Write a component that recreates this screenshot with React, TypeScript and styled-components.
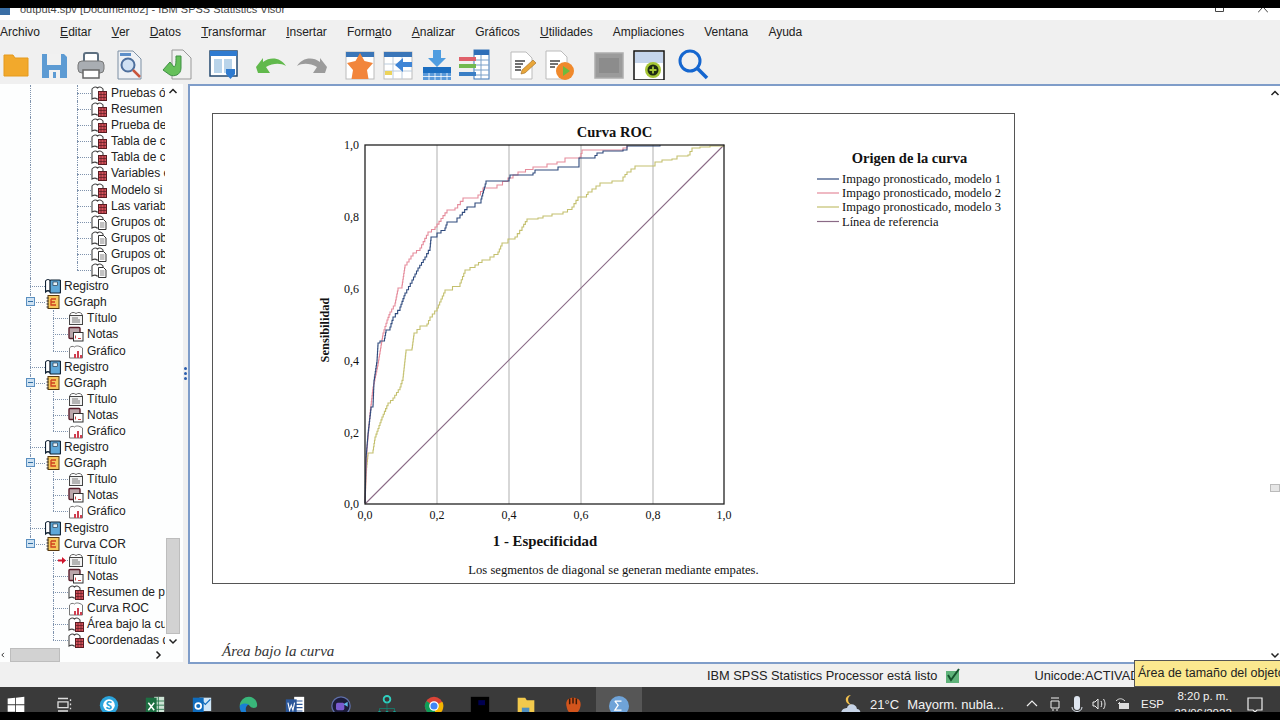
import React from 'react';
import styled, { createGlobalStyle } from 'styled-components';

const Global = createGlobalStyle`
  html, body { margin: 0; padding: 0; background: #000; }
  body { font-family: "Liberation Sans", Arial, sans-serif; overflow: hidden; }
`;

/* ---------- chart data, in page pixels ---------- */
type Pt = [number, number];

const blue: Pt[] = [[365,503],[366,457],[368,433],[371,407],[373,405],[374,380],[377,360],[378,343],[380,341],[384,341],[386,330],[390,327],[393,317],[400,307],[405,293],[412,280],[418,268],[425,257],[430,247],[431,237],[437,233],[445,228],[447,222],[457,218],[460,215],[467,207],[475,203],[481,199],[486,181],[508,181],[510,175],[533,173],[535,170],[558,167],[579,163],[579,158],[593,158],[597,153],[603,151],[623,150],[627,146],[660,145]];
const pink: Pt[] = [[365,503],[367,447],[370,413],[373,387],[378,363],[383,333],[387,320],[390,312],[395,303],[398,288],[402,285],[405,265],[413,253],[420,248],[428,232],[435,227],[447,210],[455,208],[463,198],[478,195],[483,188],[497,185],[508,178],[518,172],[533,167],[547,164],[557,162],[565,158],[580,157],[582,150],[623,148],[627,145]];
const olive: Pt[] = [[365,503],[366,473],[368,453],[373,450],[375,437],[382,417],[388,403],[393,398],[400,387],[403,377],[406,350],[412,348],[414,333],[420,326],[427,324],[430,317],[437,308],[445,290],[460,283],[465,270],[475,265],[482,260],[490,257],[498,252],[502,243],[508,239],[515,237],[522,227],[527,219],[538,218],[543,216],[552,214],[563,212],[572,207],[578,197],[585,197],[588,192],[600,183],[612,181],[623,177],[627,172],[635,166],[652,166],[655,162],[662,160],[672,159],[677,156],[688,155],[692,148],[700,147],[710,146],[724,145]];

const stairs = (pts: Pt[]) => {
  let d = `M${pts[0][0]} ${pts[0][1]}`;
  for (let i = 1; i < pts.length; i++) {
    const [x0, y0] = pts[i - 1];
    const [x1, y1] = pts[i];
    const n = Math.max(1, Math.round(Math.abs(y1 - y0) / 3));
    for (let s = 1; s <= n; s++) {
      d += `H${x0 + ((x1 - x0) * s) / n}V${y0 + ((y1 - y0) * s) / n}`;
    }
  }
  return d;
};

const legend = [
  { y: 179, color: '#2f4a7d', label: 'Impago pronosticado, modelo 1' },
  { y: 193, color: '#e58b9b', label: 'Impago pronosticado, modelo 2' },
  { y: 207, color: '#c4c06e', label: 'Impago pronosticado, modelo 3' },
  { y: 221.5, color: '#8a6a86', label: 'Línea de referencia' },
];

/* ---------- tree data ---------- */
type Kind = 'table' | 'doc' | 'log' | 'group' | 'title' | 'notes' | 'chart';
type Node = { level: 1 | 2 | 3; kind: Kind; text: string; end?: boolean; open?: boolean; mark?: boolean; after?: boolean };

const graphGroup = (): Node[] => [
  { level: 1, kind: 'group', text: 'GGraph', open: true },
  { level: 2, kind: 'title', text: 'Título' },
  { level: 2, kind: 'notes', text: 'Notas' },
  { level: 2, kind: 'chart', text: 'Gráfico', end: true },
  { level: 1, kind: 'log', text: 'Registro' },
];

const nodes: Node[] = [
  { level: 3, kind: 'table', text: 'Pruebas ómnibus' },
  { level: 3, kind: 'table', text: 'Resumen' },
  { level: 3, kind: 'table', text: 'Prueba de' },
  { level: 3, kind: 'table', text: 'Tabla de c' },
  { level: 3, kind: 'table', text: 'Tabla de c' },
  { level: 3, kind: 'table', text: 'Variables en' },
  { level: 3, kind: 'table', text: 'Modelo si se' },
  { level: 3, kind: 'table', text: 'Las variab' },
  { level: 3, kind: 'doc', text: 'Grupos ob' },
  { level: 3, kind: 'doc', text: 'Grupos ob' },
  { level: 3, kind: 'doc', text: 'Grupos ob' },
  { level: 3, kind: 'doc', text: 'Grupos ob', end: true },
  { level: 1, kind: 'log', text: 'Registro' },
  ...graphGroup(),
  ...graphGroup(),
  ...graphGroup(),
  { level: 1, kind: 'group', text: 'Curva COR', open: true, end: true },
  { level: 2, kind: 'title', text: 'Título', mark: true, after: true },
  { level: 2, kind: 'notes', text: 'Notas', after: true },
  { level: 2, kind: 'table', text: 'Resumen de procesamiento', after: true },
  { level: 2, kind: 'chart', text: 'Curva ROC', after: true },
  { level: 2, kind: 'table', text: 'Área bajo la curva', after: true },
  { level: 2, kind: 'table', text: 'Coordenadas de la curva', end: true, after: true },
];

const menu: [string, string, string][] = [
  ['', '', 'Archivo'], ['', 'E', 'ditar'], ['', 'V', 'er'], ['', 'D', 'atos'], ['', 'T', 'ransformar'],
  ['', 'I', 'nsertar'], ['Form', 'a', 'to'], ['', 'A', 'nalizar'], ['', '', 'Gráficos'], ['', 'U', 'tilidades'],
  ['', '', 'Ampliaciones'], ['', '', 'Ventana'], ['', '', 'Ayuda'],
];

/* ---------- layout ---------- */
const Screen = styled.div`
  width: 1280px;
  height: 720px;
  box-sizing: border-box;
  padding: 8px 0;
  background: #000;
  display: flex;
  flex-direction: column;
  overflow: hidden;
`;
const Win = styled.div`
  flex: 1;
  min-height: 0;
  display: flex;
  flex-direction: column;
  background: #f0f0f0;
`;
const TitleBar = styled.div`
  height: 12px;
  background: #fff;
  display: flex;
  align-items: flex-start;
  overflow: hidden;
  color: #444;
  font-size: 11px;
`;
const TitleText = styled.span`
  margin: -6px 0 0 10px;
  line-height: 14px;
  white-space: nowrap;
  flex: 1;
`;
const CaptionIcon = styled.svg<{ $r: number }>`
  margin-right: ${(p) => p.$r}px;
  flex: none;
`;
const MenuBar = styled.div`
  height: 24px;
  display: flex;
  align-items: center;
  gap: 20.1px;
  font-size: 12px;
  color: #222;
`;
const MenuItem = styled.span`
  white-space: nowrap;
`;
const Toolbar = styled.div`
  height: 40px;
  display: flex;
  align-items: flex-start;
  padding-top: 4px;
  box-sizing: border-box;
`;
const ToolSlot = styled.div<{ $gap: number }>`
  width: 32px;
  height: 32px;
  margin-left: ${(p) => p.$gap}px;
  flex: none;
`;
const Workspace = styled.div`
  flex: 1;
  min-height: 0;
  display: flex;
`;
const LeftPane = styled.div`
  width: 183px;
  height: 578px;
  flex: none;
  display: flex;
  flex-direction: column;
  background: #fdfefe;
`;
const TreeRow = styled.div`
  flex: 1;
  min-height: 0;
  display: flex;
`;
const Tree = styled.div`
  width: 165px;
  margin-right: 1px;
  flex: none;
  overflow: hidden;
  padding-top: 1px;
`;
const Row = styled.div`
  height: 16.1px;
  display: flex;
  align-items: stretch;
  position: relative;
  font-size: 12px;
  color: #222;
  white-space: nowrap;
`;
const Gutter = styled.div`
  width: 30px;
  flex: none;
`;
const Rail = styled.div<{ $w: number; $off?: boolean }>`
  width: ${(p) => p.$w}px;
  flex: none;
  box-sizing: border-box;
  border-left: 1px dotted ${(p) => (p.$off ? 'transparent' : '#7f93ad')};
`;
const Elbow = styled.div<{ $w: number; $end?: boolean }>`
  width: ${(p) => p.$w}px;
  flex: none;
  position: relative;
  &::before {
    content: '';
    position: absolute;
    left: 0;
    top: 0;
    height: ${(p) => (p.$end ? '50%' : '100%')};
    border-left: 1px dotted #7f93ad;
  }
  &::after {
    content: '';
    position: absolute;
    left: 0;
    right: 0;
    top: 50%;
    border-top: 1px dotted #7f93ad;
  }
`;
const Expander = styled.div`
  position: absolute;
  left: 26px;
  top: 3px;
  width: 7px;
  height: 7px;
  border: 1px solid #5a8fc0;
  background: #cfe3f3;
  &::after {
    content: '';
    position: absolute;
    left: 1px;
    right: 1px;
    top: 3px;
    height: 1px;
    background: #2f6ea5;
  }
`;
const Mark = styled.svg`
  position: absolute;
  left: 58px;
  top: 5px;
`;
const NodeIcon = styled.svg`
  width: 16px;
  height: 16px;
  flex: none;
`;
const NodeText = styled.span<{ $gap: number }>`
  margin-left: ${(p) => p.$gap}px;
  line-height: 16px;
`;
const VScroll = styled.div`
  width: 14px;
  flex: none;
  display: flex;
  flex-direction: column;
  align-items: stretch;
  height: 564px;
`;
const ScrollBtn = styled.div`
  height: 14px;
  flex: none;
  display: flex;
  align-items: center;
  justify-content: center;
  color: #222;
`;
const VTrack = styled.div`
  flex: 1;
  display: flex;
  flex-direction: column;
  justify-content: flex-end;
`;
const VThumb = styled.div`
  height: 96px;
  background: #d2d2d2;
  border: 1px solid #bdbdbd;
  box-sizing: border-box;
`;
const HScroll = styled.div`
  height: 14px;
  width: 166px;
  flex: none;
  display: flex;
  align-items: stretch;
`;
const HThumb = styled.div`
  width: 50px;
  background: #d2d2d2;
  border: 1px solid #bdbdbd;
  box-sizing: border-box;
  margin-left: 4px;
`;
const HEnd = styled.div`
  width: 16px;
  margin-left: auto;
  display: flex;
  align-items: center;
  justify-content: center;
`;
const HStart = styled.div`
  width: 6px;
  display: flex;
  align-items: center;
  justify-content: center;
`;
const Splitter = styled.div`
  width: 5px;
  flex: none;
  display: flex;
  flex-direction: column;
  align-items: center;
  justify-content: center;
  gap: 2px;
  height: 578px;
`;
const Grip = styled.span`
  width: 3px;
  height: 3px;
  border-radius: 50%;
  background: #2d5fae;
`;
const MainPane = styled.div`
  flex: 1;
  height: 580px;
  box-sizing: border-box;
  border: 2px solid #7f9dc9;
  border-right: 0;
  background: #fff;
  display: flex;
`;
const Viewer = styled.div`
  flex: 1;
  min-width: 0;
  padding: 27px 0 0 22px;
`;
const ChartCard = styled.div`
  width: 803px;
  height: 471px;
  box-sizing: border-box;
  border: 1px solid #555;
  background: #fff;
`;
const ChartSvg = styled.svg`
  display: block;
  margin: -1px;
  font-family: "Liberation Serif", "Times New Roman", serif;
`;
const AreaTitle = styled.div`
  margin: 59px 0 0 10px;
  font-family: "Liberation Serif", serif;
  font-style: italic;
  font-size: 15px;
  color: #333;
`;
const RightScroll = styled.div`
  width: 12px;
  flex: none;
  display: flex;
  flex-direction: column;
  align-items: flex-end;
  padding: 2px 0;
`;
const RThumb = styled.div`
  width: 10px;
  height: 8px;
  margin: 386px 0 auto;
  background: #e6e6e6;
  border: 1px solid #bbb;
  box-sizing: border-box;
`;
const StatusBar = styled.div`
  height: 23px;
  display: flex;
  align-items: center;
  position: relative;
  font-size: 12.8px;
  color: #222;
  overflow: visible;
  white-space: nowrap;
`;
const StatusText = styled.span`
  margin-left: 707px;
`;
const StatusIcon = styled.svg`
  margin-left: 8px;
  flex: none;
`;
const UnicodeText = styled.span`
  margin-left: 73px;
`;
const Tip = styled.div`
  position: absolute;
  left: 1134px;
  top: -4px;
  width: 146px;
  height: 27px;
  box-sizing: border-box;
  background: #fbe88f;
  border: 1px solid #555;
  border-right: 0;
  padding-left: 3px;
  line-height: 24px;
  font-size: 12.5px;
  overflow: hidden;
  color: #222;
`;
const Taskbar = styled.div`
  height: 25px;
  flex: none;
  background: #3a3a3a;
  display: flex;
  overflow: hidden;
  position: relative;
`;
const TaskSlot = styled.div<{ $active?: boolean }>`
  width: 46.4px;
  height: 25px;
  flex: none;
  display: flex;
  justify-content: center;
  padding-top: 8px;
  box-sizing: border-box;
  background: ${(p) => (p.$active ? '#565656' : 'transparent')};
`;
const TaskIcons = styled.div`
  display: flex;
  margin-left: -7px;
`;
const Tray = styled.div`
  margin-left: auto;
  display: flex;
  align-items: flex-start;
  color: #f2f2f2;
  font-size: 13px;
  padding: 9px 16px 0 0;
  white-space: nowrap;
`;
const TrayText = styled.span<{ $gap?: number; $size?: number }>`
  margin-left: ${(p) => p.$gap ?? 0}px;
  font-size: ${(p) => p.$size ?? 13}px;
  line-height: 17px;
`;
const TrayIcon = styled.svg<{ $gap?: number; $top?: number }>`
  margin-left: ${(p) => p.$gap ?? 0}px;
  margin-top: ${(p) => p.$top ?? 0}px;
  flex: none;
`;
const Clock = styled.div`
  margin-left: 4px;
  width: 70px;
  text-align: center;
  font-size: 11.5px;
  line-height: 17px;
  margin-top: -8px;
`;

/* ---------- icons ---------- */
const Book = () => (
  <path d="M1 4 C3 1.500 5 1.500 6.500 3 C8 1.500 10 1.500 12 4 V8 H8 V14 H6 C5 13 3 13 1 14 Z" fill="#fff" stroke="#444" strokeWidth="1.100" />
);

const TreeIcon = ({ kind }: { kind: Kind }) => {
  if (kind === 'log')
    return (
      <NodeIcon viewBox="0 0 16 16">
        <path d="M0.500 3 C2 1 4 1 5.500 3 V14 C4 12.500 2 12.500 0.500 14 Z" fill="#fff" stroke="#123" strokeWidth="1.200" />
        <rect x="5" y="2" width="10.500" height="13" rx="1" fill="#5fa8d8" stroke="#123" strokeWidth="1.200" />
        <rect x="8" y="4" width="4.500" height="3.500" fill="#e6f3fb" stroke="#123" strokeWidth=".6" />
      </NodeIcon>
    );
  if (kind === 'group')
    return (
      <NodeIcon viewBox="0 0 16 16">
        <rect x="3" y="1.500" width="11" height="13" fill="#f6c95e" stroke="#5a3a10" />
        <path d="M1.500 4h2M1.500 7h2M1.500 10h2M1.500 13h2" stroke="#222" />
        <path d="M6 5h5M6 5v6h5M6 8h4" stroke="#d0401f" strokeWidth="1.300" fill="none" />
      </NodeIcon>
    );
  if (kind === 'table')
    return (
      <NodeIcon viewBox="0 0 16 16">
        <Book />
        <rect x="7.500" y="6.500" width="8" height="9" fill="#d4505a" stroke="#5a1d22" />
        <path d="M7.500 9.500h8M7.500 12.500h8M10 6.500v9M13 6.500v9" stroke="#5a1d22" strokeWidth=".7" />
      </NodeIcon>
    );
  if (kind === 'doc')
    return (
      <NodeIcon viewBox="0 0 16 16">
        <Book />
        <path d="M7.500 5.500h5l2.500 2.500v7.500H7.500Z" fill="#fff" stroke="#333" />
        <path d="M9 9h4.500M9 11h4.500M9 13h4.500" stroke="#666" strokeWidth=".8" />
      </NodeIcon>
    );
  if (kind === 'title')
    return (
      <NodeIcon viewBox="0 0 16 16">
        <path d="M2 4 C4 2 6 2 8 3.500 C10 2 12 2 14 4 V6 H2Z" fill="#fff" stroke="#666" />
        <rect x="1.500" y="5.500" width="13" height="9" fill="#f3f3f3" stroke="#444" />
        <path d="M4 8h6M4 10h8M4 12h8" stroke="#777" strokeWidth="1" />
      </NodeIcon>
    );
  if (kind === 'notes')
    return (
      <NodeIcon viewBox="0 0 16 16">
        <rect x="1" y="1.500" width="11" height="11" rx="1" fill="#b9a6aa" stroke="#5a1d2a" strokeWidth="1.400" />
        <rect x="5.500" y="6.500" width="9.500" height="8.500" fill="#fff" stroke="#333" />
        <path d="M7.500 9.500v3M10 12.500h3" stroke="#c44" strokeWidth="1" />
      </NodeIcon>
    );
  return (
    <NodeIcon viewBox="0 0 16 16">
      <path d="M1.500 5 C3 3 5 3 6.500 4 C8 2.500 11 2.500 14.500 5 V15 H1.500Z" fill="#fff" stroke="#777" />
      <path d="M6 15v-4h2v4ZM9 15V8h2v7ZM12 15v-3h2v3Z" fill="#cf3f50" />
    </NodeIcon>
  );
};

const Chevron = ({ d }: { d: string }) => (
  <svg width="10" height="10" viewBox="0 0 10 10">
    <path d={d} fill="none" stroke="#222" strokeWidth="1.500" />
  </svg>
);
const UP = 'M1.500 7 L5 3.500 L8.500 7';
const DOWN = 'M1.500 3.500 L5 7 L8.500 3.500';
const LEFT = 'M6.500 1.500 L3 5 L6.500 8.500';
const RIGHT = 'M3.500 1.500 L7 5 L3.500 8.500';

const tools: { gap: number; art: React.ReactNode }[] = [
  { gap: 0.5, art: <path d="M3 10 V7 H12 L14 10 H27 V28 H3Z" fill="#f2a92c" stroke="#e59a1c" /> },
  { gap: 5.5, art: (<g><path d="M4 6H26L29 9V30H4Z" fill="#5d9bd3" /><rect x="9" y="6" width="14" height="11" fill="#f1f1f1" /><rect x="11" y="22" width="11" height="8" fill="#f1f1f1" /><rect x="15" y="24" width="3" height="6" fill="#5d9bd3" /></g>) },
  { gap: 5, art: (<g><rect x="9" y="5" width="14" height="10" rx="2" fill="#fff" stroke="#5d6f80" strokeWidth="2" /><rect x="3" y="13" width="26" height="12" rx="4" fill="#a9adb2" stroke="#777" /><rect x="8" y="22" width="16" height="8" fill="#fff" stroke="#666" strokeWidth="1.500" /></g>) },
  { gap: 6.5, art: (<g><path d="M4 3H19L27 11V31H4Z" fill="#eef1f5" stroke="#7d8fa3" /><rect x="6" y="5" width="11" height="3" fill="#5d8fc9" /><circle cx="14" cy="17" r="6.500" fill="#cfe0f3" stroke="#4d6f9d" strokeWidth="2" /><path d="M19 22 L26 29" stroke="#c8553c" strokeWidth="2.500" /></g>) },
  { gap: 15.5, art: (<g><path d="M11 2H22L30 10V31H11Z" fill="#f1f1f1" stroke="#999" /><path d="M15 8H20V20C20 27 13 29 9 27 L2 22 9 14 13 19C15 18 15 15 15 8Z" fill="#66c05a" stroke="#3f8f44" /></g>) },
  { gap: 14.5, art: (<g><rect x="2" y="3" width="27" height="25" fill="#fff" stroke="#23486f" strokeWidth="1.500" /><rect x="2" y="3" width="27" height="5" fill="#2f7bd0" /><rect x="6" y="11" width="8" height="14" fill="#b9d4ea" /><rect x="16" y="11" width="8" height="14" fill="#b9d4ea" /><path d="M18 21H27V26L22.500 31 18 26Z" fill="#2f7bd0" /></g>) },
  { gap: 15.5, art: <path d="M1 19 L8 10 V14 C16 8 26 10 31 18 C26 15 18 15 11 19 L15 25 H3Z" fill="#61b94c" /> },
  { gap: 9, art: <path d="M31 19 L24 10 V14 C16 8 6 10 1 18 C6 15 14 15 21 19 L17 25 H29Z" fill="#9b9b9b" /> },
  { gap: 16, art: (<g><rect x="2" y="4" width="28" height="27" fill="#fff" stroke="#bbb" /><rect x="2" y="4" width="28" height="5" fill="#3b76b8" /><path d="M16 5 L20.500 13 L29 15 L23 22 L24.500 31 H7.500 L9 22 L3 15 L11.500 13Z" fill="#f2853b" /></g>) },
  { gap: 6, art: (<g><rect x="2" y="4" width="28" height="27" fill="#fff" stroke="#bbb" /><rect x="2" y="4" width="28" height="5" fill="#3b76b8" /><path d="M2 16H30M2 23H30M11 9V31M20 9V31" stroke="#bcd" /><path d="M30 14 H21 V10 L13 17 L21 24 V19 H30Z" fill="#3f85d6" /><rect x="3" y="23" width="7" height="4" fill="#ecd35a" /></g>) },
  { gap: 6.5, art: (<g><path d="M12 2H20V10H25L16 19 7 10H12Z" fill="#4f9de0" /><rect x="2" y="19" width="28" height="6" fill="#1c6ec0" /><rect x="2" y="25" width="28" height="7" fill="#5a9ada" /><path d="M8 25v7M14 25v7M20 25v7M26 25v7M2 28.500h28" stroke="#fff" strokeWidth=".8" /></g>) },
  { gap: 5.5, art: (<g><rect x="16" y="2" width="15" height="29" fill="#fff" stroke="#3b76b8" /><rect x="16" y="2" width="15" height="5" fill="#2f6fb8" /><path d="M16 12H31M16 17H31M16 22H31M16 27H31M23 7V31" stroke="#7aa0c8" /><rect x="1" y="9" width="17" height="4" fill="#e0606a" /><rect x="1" y="16" width="17" height="4" fill="#72b94f" /><rect x="1" y="24" width="17" height="4" fill="#3a7ec5" /></g>) },
  { gap: 15, art: (<g><path d="M6 4H21L27 10V31H6Z" fill="#fff" stroke="#bbb" /><path d="M10 13H20M10 16H18M10 19H16M10 22H16" stroke="#444" strokeWidth="1.600" /><path d="M17 22 L28 12 L31 15 L20 25 L16 26Z" fill="#e8a63a" stroke="#a06a20" strokeWidth=".6" /></g>) },
  { gap: 6, art: (<g><path d="M3 3H18L24 9V31H3Z" fill="#fff" stroke="#bbb" /><path d="M7 13H17M7 16H15M7 19H12" stroke="#444" strokeWidth="1.600" /><circle cx="22" cy="23" r="9" fill="#f0892c" /><path d="M20 18 L27 23 L20 28Z" fill="#6dbb3f" /></g>) },
  { gap: 17.5, art: (<g><rect x="2" y="5" width="28" height="25" fill="#9b9b9b" stroke="#adadad" strokeWidth="1.500" /><rect x="6" y="10" width="20" height="15" fill="#8c8c8c" /></g>) },
  { gap: 8, art: (<g><rect x="1" y="3" width="30" height="29" fill="#fff" stroke="#111" strokeWidth="1.500" /><rect x="2" y="4" width="28" height="11" fill="#c5d5ec" /><circle cx="20" cy="22" r="8" fill="#a6c635" /><circle cx="20" cy="22" r="5.500" fill="#1d2a12" /><path d="M20 18.500v7M16.500 22h7" stroke="#a6c635" strokeWidth="1.800" /></g>) },
  { gap: 12.5, art: (<g><circle cx="13" cy="13" r="10" fill="none" stroke="#1566cf" strokeWidth="3" /><path d="M20 20 L30 30" stroke="#1566cf" strokeWidth="3.500" /></g>) },
];

const taskIcons: React.ReactNode[] = [
  <path d="M2 4 L11 3 V11 H2ZM12 3 L22 2 V11 H12ZM2 12H11V20H2ZM12 12H22V21H12Z" fill="#fff" />,
  <path d="M6 4H18M6 19H18M6 8H18V15H6ZM21 5v2M21 10v2M21 15v2" stroke="#ddd" strokeWidth="1.600" fill="none" />,
  <g><circle cx="12" cy="12" r="11" fill="#2ba4dc" /><circle cx="12" cy="12" r="7" fill="#fff" /><path d="M15 9 C13 7 9 8 10 10.500 C11 13 15 12 14.500 15 C13 17 10 16 9 14.500" stroke="#2ba4dc" strokeWidth="2" fill="none" /></g>,
  <g><rect x="11" y="2" width="12" height="22" fill="#cde3d5" /><path d="M11 7H23M11 12H23M11 17H23M16 2V24" stroke="#1d6f42" /><rect x="1" y="3" width="13" height="21" fill="#1d6f42" /><path d="M4 9 L11 18M11 9 L4 18" stroke="#fff" strokeWidth="1.800" /></g>,
  <g><rect x="9" y="3" width="14" height="16" fill="#cfe6f7" /><path d="M10 5 L16 11 L22 5" fill="none" stroke="#0f6cbd" strokeWidth="1.500" /><rect x="1" y="3" width="13" height="22" fill="#0f6cbd" /><circle cx="7.500" cy="13" r="3.500" fill="none" stroke="#fff" strokeWidth="2" /></g>,
  <g><path d="M2 14 C2 6 8 2 13 2 C19 2 23 7 23 12 C23 16 17 16 15 14 C13 10 6 9 2 14Z" fill="#39b67a" /><path d="M2 14 C2 21 8 25 14 25 C9 22 7 14 13 11 C8 9 3 10 2 14Z" fill="#1a7fd4" /></g>,
  <g><rect x="11" y="2" width="12" height="22" fill="#fff" /><path d="M13 7H21M13 11H21M13 15H21M13 19H21" stroke="#2b579a" strokeWidth="1.400" /><rect x="1" y="5" width="13" height="18" fill="#2b579a" /><path d="M3.500 9 L5.500 18 L7.500 12 L9.500 18 L11.500 9" stroke="#fff" strokeWidth="1.300" fill="none" /></g>,
  <g><circle cx="12" cy="13" r="11" fill="#1c1c3a" stroke="#5f6fa8" strokeWidth="1.500" /><rect x="6" y="9" width="10" height="9" rx="2" fill="#7a5ad0" /><path d="M15 11 L20 8 V14Z" fill="#5db8e8" /></g>,
  <g fill="#14a89a"><circle cx="12" cy="5" r="4" fill="none" stroke="#2fd0c0" strokeWidth="2.200" /><path d="M12 9v6M3 19v-3H21v3M12 15v5" stroke="#14806f" fill="none" /><circle cx="3" cy="21" r="2" /><circle cx="12" cy="21" r="2" /><circle cx="21" cy="21" r="2" /></g>,
  <g><circle cx="12" cy="13" r="11" fill="#db4437" /><path d="M12 13 L22 8 A11 11 0 0 1 14 24Z" fill="#f4b400" /><path d="M12 13 L14 24 A11 11 0 0 1 3 7Z" fill="#0f9d58" /><circle cx="12" cy="13" r="5" fill="#4285f4" stroke="#fff" strokeWidth="1.500" /></g>,
  <g><rect x="1" y="2" width="22" height="24" fill="#000" /><rect x="10" y="6" width="8" height="6" fill="#000050" /></g>,
  <g><path d="M2 3H11L13 6H22V26H2Z" fill="#f2c94c" /><rect x="7" y="15" width="9" height="9" fill="#4f8fc0" /></g>,
  <g><path d="M4 12 C3 5 8 3 12 3 C18 3 22 6 21 13 C20 19 16 23 12 23 C8 23 5 19 4 12Z" fill="#d2541c" /><path d="M8 4v7M12 3v7M16 4v7" stroke="#3a1a08" strokeWidth="1.800" /></g>,
  <g><circle cx="12" cy="13" r="12" fill="#6fa3d8" /><path d="M7 7H15M7 7 L11 12 7 18H15" stroke="#fff" strokeWidth="1.500" fill="none" /></g>,
];

export default function App() {
  const grid = [437, 509, 581, 653];
  const xTicks: [number, string][] = [[365, '0,0'], [437, '0,2'], [509, '0,4'], [581, '0,6'], [653, '0,8'], [724, '1,0']];
  const yTicks: [number, string][] = [[145, '1,0'], [217, '0,8'], [289, '0,6'], [361, '0,4'], [433, '0,2'], [504, '0,0']];

  return (
    <Screen>
      <Global />
      <Win>
        <TitleBar>
          <svg width="10" height="7" viewBox="0 0 10 7"><rect width="10" height="7" fill="#3a6ea5" /></svg>
          <TitleText>output4.spv [Documento2] - IBM SPSS Statistics Visor</TitleText>
          <CaptionIcon $r={34} width="9" height="4" viewBox="0 0 9 4"><path d="M.5 0V3.500H8.500V0" fill="none" stroke="#444" /></CaptionIcon>
          <CaptionIcon $r={12} width="10" height="5" viewBox="0 0 10 5"><path d="M0 4.500 L4 0M10 4.500 L6 0" fill="none" stroke="#444" /></CaptionIcon>
        </TitleBar>
        <MenuBar>
          {menu.map(([a, m, b]) => (
            <MenuItem key={a + m + b}>{a}{m && <u>{m}</u>}{b}</MenuItem>
          ))}
        </MenuBar>
        <Toolbar>
          {tools.map((t, i) => (
            <ToolSlot key={i} $gap={t.gap}>
              <svg width="32" height="32" viewBox="0 0 32 32">{t.art}</svg>
            </ToolSlot>
          ))}
        </Toolbar>
        <Workspace>
          <LeftPane>
            <TreeRow>
              <Tree>
                {nodes.map((n, i) => (
                  <Row key={i}>
                    <Gutter />
                    {n.level === 3 && <Rail $w={47} />}
                    {n.level === 2 && <Rail $w={23} $off={n.after} />}
                    <Elbow $w={n.level === 3 ? 14 : 15} $end={n.end} />
                    {n.open && <Expander />}
                    {n.mark && (
                      <Mark width="8" height="7" viewBox="0 0 8 7"><path d="M0 2.500H4V0L8 3.500 4 7V4.500H0Z" fill="#d0142c" /></Mark>
                    )}
                    <TreeIcon kind={n.kind} />
                    <NodeText $gap={n.level === 3 ? 4 : 3}>{n.text}</NodeText>
                  </Row>
                ))}
              </Tree>
              <VScroll>
                <ScrollBtn><Chevron d={UP} /></ScrollBtn>
                <VTrack><VThumb /></VTrack>
                <ScrollBtn><Chevron d={DOWN} /></ScrollBtn>
              </VScroll>
            </TreeRow>
            <HScroll>
              <HStart><Chevron d={LEFT} /></HStart>
              <HThumb />
              <HEnd><Chevron d={RIGHT} /></HEnd>
            </HScroll>
          </LeftPane>
          <Splitter><Grip /><Grip /><Grip /></Splitter>
          <MainPane>
            <Viewer>
              <ChartCard>
                <ChartSvg width="803" height="471" viewBox="212 113 803 471">
                  <text x="614.500" y="137" fontSize="14.500" fontWeight="bold" textAnchor="middle" fill="#111">Curva ROC</text>
                  {grid.map((x) => <line key={x} x1={x} x2={x} y1={145} y2={504} stroke="#bdbdbd" strokeWidth="1.200" />)}
                  <line x1="365" y1="504" x2="724" y2="145" stroke="#8a6a86" strokeWidth="1.100" />
                  <path d={stairs(olive)} fill="none" stroke="#c4c06e" strokeWidth="1.100" />
                  <path d={stairs(pink)} fill="none" stroke="#e58b9b" strokeWidth="1.100" />
                  <path d={stairs(blue)} fill="none" stroke="#2f4a7d" strokeWidth="1.100" />
                  <rect x="365" y="145" width="359" height="359" fill="none" stroke="#222" strokeWidth="1.300" />
                  {yTicks.map(([y, t]) => <text key={t} x="359" y={y + 4} fontSize="12" textAnchor="end" fill="#111">{t}</text>)}
                  {xTicks.map(([x, t]) => <text key={t} x={x} y="519" fontSize="12" textAnchor="middle" fill="#111">{t}</text>)}
                  <text x="545" y="546" fontSize="14.800" fontWeight="bold" textAnchor="middle" fill="#111">1 - Especificidad</text>
                  <text transform="translate(329 330) rotate(-90)" fontSize="12.400" fontWeight="bold" textAnchor="middle" fill="#111">Sensibilidad</text>
                  <text x="613.500" y="574" fontSize="12.600" textAnchor="middle" fill="#111">Los segmentos de diagonal se generan mediante empates.</text>
                  <text x="909.500" y="163" fontSize="14.500" fontWeight="bold" textAnchor="middle" fill="#111">Origen de la curva</text>
                  {legend.map((l) => (
                    <g key={l.y}>
                      <line x1="817" x2="839" y1={l.y} y2={l.y} stroke={l.color} strokeWidth="1.200" />
                      <text x="842" y={l.y + 4} fontSize="12.500" fill="#111">{l.label}</text>
                    </g>
                  ))}
                </ChartSvg>
              </ChartCard>
              <AreaTitle>Área bajo la curva</AreaTitle>
            </Viewer>
            <RightScroll>
              <Chevron d={UP} />
              <RThumb />
              <Chevron d={DOWN} />
            </RightScroll>
          </MainPane>
        </Workspace>
        <StatusBar>
          <StatusText>IBM SPSS Statistics Processor está listo</StatusText>
          <StatusIcon width="16" height="16" viewBox="0 0 16 16">
            <rect x="1" y="3" width="13" height="12" fill="#5fb37a" />
            <path d="M3 7 L6 12 L14 1" fill="none" stroke="#14532d" strokeWidth="2" />
          </StatusIcon>
          <UnicodeText>Unicode:ACTIVADO</UnicodeText>
          <Tip>Área de tamaño del objeto</Tip>
        </StatusBar>
      </Win>
      <Taskbar>
        <TaskIcons>
          {taskIcons.map((art, i) => (
            <TaskSlot key={i} $active={i === 13}>
              <svg width="20" height="22" viewBox="0 0 24 26">{art}</svg>
            </TaskSlot>
          ))}
        </TaskIcons>
        <Tray>
          <TrayIcon $top={-2} width="22" height="24" viewBox="0 0 22 24">
            <path d="M12 1 C8 3 8 9 13 11 C9 11 6 8 7 4 C8 2 10 1 12 1Z" fill="#f2c14e" />
            <path d="M2 20 C2 15 6 14 8 14 C9 9 17 9 18 15 C21 15 22 18 21 20Z" fill="#c6d3e6" />
          </TrayIcon>
          <TrayText $gap={9}>21°C</TrayText>
          <TrayText $gap={8}>Mayorm. nubla...</TrayText>
          <TrayIcon $gap={21} width="14" height="16" viewBox="0 0 14 16"><path d="M2 10 L7 5 L12 10" fill="none" stroke="#eee" strokeWidth="1.200" /></TrayIcon>
          <TrayIcon $gap={9} width="14" height="16" viewBox="0 0 14 16"><path d="M3 2H11M3 5H11V12H3ZM5 13v2M9 13v2" stroke="#eee" fill="none" /></TrayIcon>
          <TrayIcon $gap={9} width="12" height="18" viewBox="0 0 12 18"><rect x="3" y="0" width="6" height="14" rx="3" fill="#dfe6f0" /><path d="M1 11 C1 17 11 17 11 11" stroke="#dfe6f0" fill="none" /></TrayIcon>
          <TrayIcon $gap={9} width="15" height="16" viewBox="0 0 15 16"><path d="M1 6H3L6 3V13L3 10H1ZM9 5C10 7 10 9 9 11M11.500 3C13.500 6 13.500 10 11.500 13" stroke="#eee" fill="none" /></TrayIcon>
          <TrayIcon $gap={8} width="15" height="16" viewBox="0 0 15 16"><rect x="4" y="7" width="10" height="6" fill="#ddd" /><path d="M1 5 C4 2 7 2 10 5M3 8 L5 6" stroke="#ddd" fill="none" /></TrayIcon>
          <TrayText $gap={11} $size={11.5}>ESP</TrayText>
          <Clock>8:20 p. m.<br />22/06/2022</Clock>
          <TrayIcon $gap={8} width="18" height="18" viewBox="0 0 18 18"><path d="M2 2H16V14H11L9 16 7 14H2Z" fill="none" stroke="#eee" strokeWidth="1.200" /></TrayIcon>
        </Tray>
      </Taskbar>
    </Screen>
  );
}
